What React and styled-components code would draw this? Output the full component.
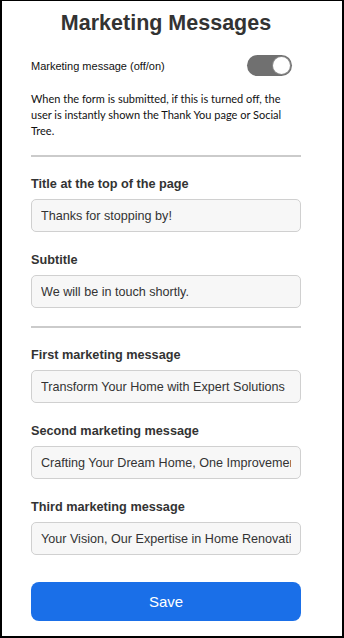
import React, { useState } from "react";
import styled, { createGlobalStyle } from "styled-components";

const GlobalStyle = createGlobalStyle`
  * { box-sizing: border-box; }
  body {
    margin: 0;
    background: #fff;
    font-family: "Liberation Sans", Arial, sans-serif;
  }
`;

const Frame = styled.div`
  width: 344px;
  height: 638px;
  border: 2px solid #000;
  border-top-width: 1px;
  background: #fff;
  overflow: hidden;
  padding: 9px 0 0 29px;
`;

const Panel = styled.div`
  width: 270px;
  display: flex;
  flex-direction: column;
`;

const Title = styled.h1`
  margin: 0;
  font-size: 21.5px;
  line-height: 26px;
  font-weight: 700;
  color: #333;
  text-align: center;
`;

const ToggleRow = styled.div`
  display: flex;
  align-items: center;
  justify-content: space-between;
  margin-top: 19px;
  padding-right: 9px;
`;

const ToggleLabel = styled.span`
  font-size: 11px;
  color: #111;
`;

const Switch = styled.button`
  position: relative;
  width: 45px;
  height: 21px;
  border: none;
  padding: 0;
  border-radius: 11px;
  background: ${(p) => (p.$on ? "#707070" : "#bdbdbd")};
  cursor: pointer;

  &::after {
    content: "";
    position: absolute;
    top: 2px;
    left: ${(p) => (p.$on ? "26px" : "2px")};
    width: 17px;
    height: 17px;
    border-radius: 50%;
    background: #fff;
    box-shadow: 0 0 0 1px #8a8a8a;
  }
`;

const Note = styled.p`
  margin: 15px 0 0;
  font-family: Lato, "Noto Sans", sans-serif;
  font-size: 11px;
  line-height: 16px;
  color: #111;
`;

const Divider = styled.hr`
  width: 100%;
  margin: ${(p) => p.$top || 18}px 0 19px;
  border: none;
  height: 2px;
  background: #cbcbcb;
`;

const Field = styled.label`
  display: flex;
  flex-direction: column;
  gap: 7px;
  & + & {
    margin-top: 20px;
  }
`;

const FieldLabel = styled.span`
  font-size: 12.7px;
  line-height: 16px;
  font-weight: 700;
  color: #333;
`;

const Input = styled.input`
  width: 100%;
  height: 33px;
  padding: 0 9px;
  border: 1px solid #d0d0d0;
  border-radius: 5px;
  background: #f7f7f7;
  font-family: "Liberation Sans", Arial, sans-serif;
  font-size: 12.6px;
  color: #333;
  outline: none;
`;

const SaveButton = styled.button`
  margin-top: 27px;
  height: 39px;
  width: 100%;
  border: none;
  border-radius: 8px;
  background: #1a6fe8;
  color: #fff;
  font-family: "Liberation Sans", Arial, sans-serif;
  font-size: 15px;
  cursor: pointer;
`;

const headerFields = [
  { label: "Title at the top of the page", value: "Thanks for stopping by!" },
  { label: "Subtitle", value: "We will be in touch shortly." },
];

const messageFields = [
  { label: "First marketing message", value: "Transform Your Home with Expert Solutions" },
  { label: "Second marketing message", value: "Crafting Your Dream Home, One Improvement at a Time" },
  { label: "Third marketing message", value: "Your Vision, Our Expertise in Home Renovation" },
];

function FieldList({ fields }) {
  return fields.map((f) => (
    <Field key={f.label}>
      <FieldLabel>{f.label}</FieldLabel>
      <Input defaultValue={f.value} />
    </Field>
  ));
}

export default function App() {
  const [on, setOn] = useState(true);

  return (
    <>
      <GlobalStyle />
      <Frame>
        <Panel>
          <Title>Marketing Messages</Title>
          <ToggleRow>
            <ToggleLabel>Marketing message (off/on)</ToggleLabel>
            <Switch $on={on} onClick={() => setOn(!on)} aria-label="toggle" />
          </ToggleRow>
          <Note>
            When the form is submitted, if this is turned off, the user is
            instantly shown the Thank You page or Social Tree.
          </Note>
          <Divider $top={16} />
          <FieldList fields={headerFields} />
          <Divider />
          <FieldList fields={messageFields} />
          <SaveButton>Save</SaveButton>
        </Panel>
      </Frame>
    </>
  );
}
